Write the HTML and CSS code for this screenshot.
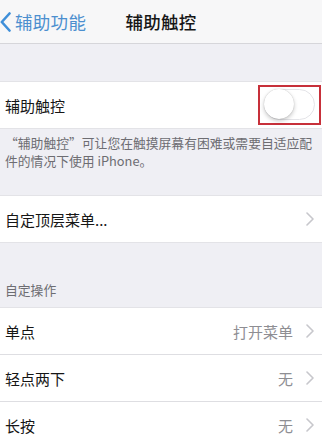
FILE: index.html
```html
<!DOCTYPE html>
<html lang="zh-CN">
<head>
<meta charset="utf-8">
<link rel="stylesheet" href="styles.css">
</head>
<body>
<div class="screen">
  <header class="nav">
    <div class="back">
      <svg class="back-chev" width="11" height="20" viewBox="0 0 11 20"><path d="M9.5 1.5 L1.8 10 L9.5 18.5" fill="none" stroke="#3f8fd9" stroke-width="2.6" stroke-linecap="round" stroke-linejoin="round"/></svg>
      <span class="back-text">辅助功能</span>
    </div>
    <div class="title">辅助触控</div>
    <div></div>
  </header>

  <div class="gap-top"></div>

  <div class="group">
    <div class="row row-toggle">
      <span class="label">辅助触控</span>
      <span class="mark">
        <span class="switch"><span class="knob"></span></span>
      </span>
    </div>
  </div>
  <p class="note">“辅助触控”可让您在触摸屏幕有困难或需要自适应配<br>件的情况下使用 iPhone。</p>

  <div class="group">
    <div class="row">
      <span class="label">自定顶层菜单...</span>
      <span class="right"><svg class="chev" width="8" height="14" viewBox="0 0 8 14"><path d="M1 1 L7 7 L1 13" fill="none" stroke="#c7c7cc" stroke-width="1.6" stroke-linecap="round" stroke-linejoin="round"/></svg></span>
    </div>
  </div>

  <div class="section-head">自定操作</div>

  <div class="group">
    <div class="row">
      <span class="label">单点</span>
      <span class="right"><span class="value">打开菜单</span><svg class="chev" width="8" height="14" viewBox="0 0 8 14"><path d="M1 1 L7 7 L1 13" fill="none" stroke="#c7c7cc" stroke-width="1.6" stroke-linecap="round" stroke-linejoin="round"/></svg></span>
    </div>
    <div class="row">
      <span class="label">轻点两下</span>
      <span class="right"><span class="value">无</span><svg class="chev" width="8" height="14" viewBox="0 0 8 14"><path d="M1 1 L7 7 L1 13" fill="none" stroke="#c7c7cc" stroke-width="1.6" stroke-linecap="round" stroke-linejoin="round"/></svg></span>
    </div>
    <div class="row">
      <span class="label">长按</span>
      <span class="right"><span class="value">无</span><svg class="chev" width="8" height="14" viewBox="0 0 8 14"><path d="M1 1 L7 7 L1 13" fill="none" stroke="#c7c7cc" stroke-width="1.6" stroke-linecap="round" stroke-linejoin="round"/></svg></span>
    </div>
  </div>
</div>
</body>
</html>
```

FILE: styles.css
```css
html, body {
  margin: 0;
  padding: 0;
  background: #efeff4;
}
body {
  font-family: "Noto Sans CJK SC", "Noto Sans", sans-serif;
  color: #111;
}
.screen {
  width: 322px;
  height: 437px;
  overflow: hidden;
  background: #efeff4;
}
.nav {
  height: 43px;
  background: #f7f7f8;
  border-bottom: 1px solid #d6d6da;
  display: grid;
  grid-template-columns: 1fr auto 1fr;
  align-items: center;
}
.back {
  display: flex;
  align-items: center;
  gap: 4px;
}
.back-chev {
  display: block;
}
.back-text {
  font-size: 17.5px;
  color: #4c8fcf;
  letter-spacing: 0.3px;
}
.title {
  font-size: 17.5px;
  font-weight: 500;
  color: #161616;
  letter-spacing: 0.3px;
}
.gap-top {
  height: 37px;
}
.group {
  background: #fff;
  border-top: 1px solid #e3e3e7;
  border-bottom: 1px solid #e3e3e7;
}
.row {
  height: 46px;
  display: flex;
  align-items: center;
  justify-content: space-between;
  padding: 0 5px;
}
.row + .row {
  border-top: 1px solid #dedee2;
}
.row-toggle {
  padding-right: 1px;
}
.label {
  font-size: 15px;
  color: #161616;
}
.mark {
  border: 2px solid #c7303a;
  padding: 2px 4px 3px;
  display: flex;
}
.switch {
  width: 51px;
  height: 31px;
  box-sizing: border-box;
  border-radius: 16px;
  border: 1.5px solid #e4e4e8;
  background: #fff;
  position: relative;
}
.knob {
  position: absolute;
  left: -1px;
  top: -1px;
  width: 30px;
  height: 30px;
  border-radius: 50%;
  background: #fff;
  box-shadow: 0 2px 4px rgba(0,0,0,0.22), 0 0 1px rgba(0,0,0,0.25);
}
.note {
  margin: 0;
  padding: 5px 6px 25px 5px;
  font-size: 12.8px;
  line-height: 18px;
  color: #6d6d72;
  white-space: nowrap;
}
.right {
  display: flex;
  align-items: center;
  gap: 13px;
  padding-right: 3px;
}
.value {
  font-size: 15px;
  color: #8e8e93;
}
.chev {
  display: block;
}
.section-head {
  height: 64px;
  box-sizing: border-box;
  display: flex;
  align-items: flex-end;
  padding: 0 5px 8px;
  font-size: 12.8px;
  color: #6d6d72;
}
```
